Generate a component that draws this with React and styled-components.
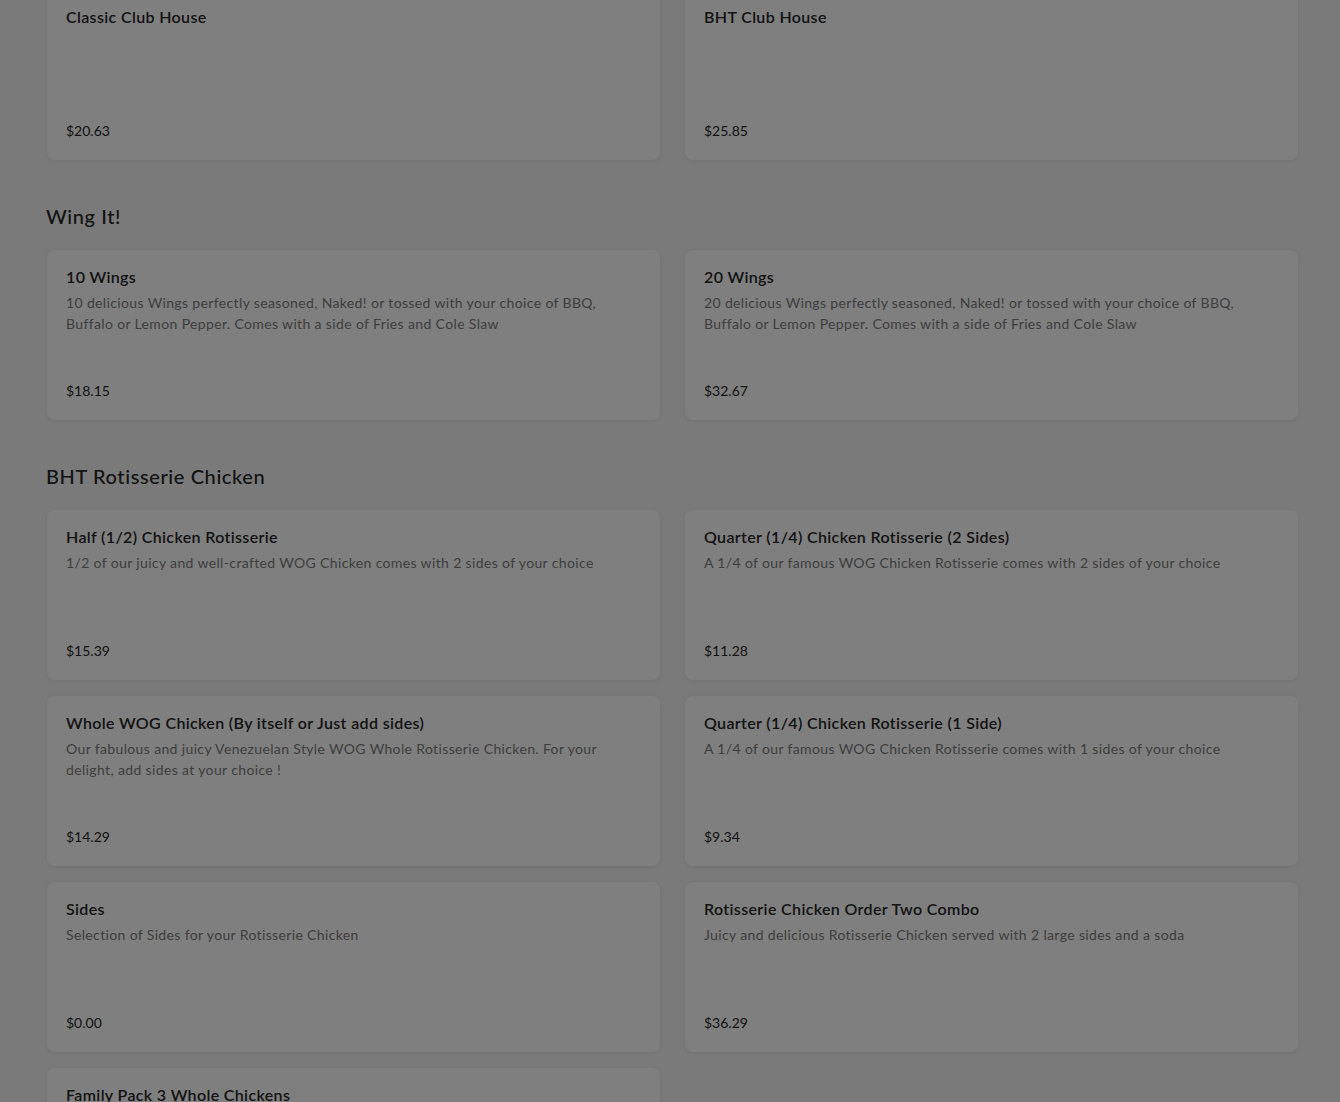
import React from "react"
import styled, { createGlobalStyle } from "styled-components"

const GlobalStyle = createGlobalStyle`
  html, body {
    margin: 0;
    padding: 0;
    background: #f4f4f4;
    font-family: Lato, "Noto Sans", sans-serif;
    overflow: hidden;
  }
`

const menu = [
  {
    title: null,
    items: [
      { name: "Classic Club House", price: "$20.63" },
      { name: "BHT Club House", price: "$25.85" },
    ],
  },
  {
    title: "Wing It!",
    items: [
      {
        name: "10 Wings",
        desc: "10 delicious Wings perfectly seasoned, Naked! or tossed with your choice of BBQ, Buffalo or Lemon Pepper. Comes with a side of Fries and Cole Slaw",
        price: "$18.15",
      },
      {
        name: "20 Wings",
        desc: "20 delicious Wings perfectly seasoned, Naked! or tossed with your choice of BBQ, Buffalo or Lemon Pepper. Comes with a side of Fries and Cole Slaw",
        price: "$32.67",
      },
    ],
  },
  {
    title: "BHT Rotisserie Chicken",
    items: [
      {
        name: "Half (1/2) Chicken Rotisserie",
        desc: "1/2 of our juicy and well-crafted WOG Chicken comes with 2 sides of your choice",
        price: "$15.39",
      },
      {
        name: "Quarter (1/4) Chicken Rotisserie (2 Sides)",
        desc: "A 1/4 of our famous WOG Chicken Rotisserie comes with 2 sides of your choice",
        price: "$11.28",
      },
      {
        name: "Whole WOG Chicken (By itself or Just add sides)",
        desc: "Our fabulous and juicy Venezuelan Style WOG Whole Rotisserie Chicken. For your delight, add sides at your choice !",
        price: "$14.29",
      },
      {
        name: "Quarter (1/4) Chicken Rotisserie (1 Side)",
        desc: "A 1/4 of our famous WOG Chicken Rotisserie comes with 1 sides of your choice",
        price: "$9.34",
      },
      {
        name: "Sides",
        desc: "Selection of Sides for your Rotisserie Chicken",
        price: "$0.00",
      },
      {
        name: "Rotisserie Chicken Order Two Combo",
        desc: "Juicy and delicious Rotisserie Chicken served with 2 large sides and a soda",
        price: "$36.29",
      },
      { name: "Family Pack 3 Whole Chickens", desc: "", price: "" },
    ],
  },
]

const App = () => {
  return (
    <>
      <GlobalStyle />
      <Page>
        {menu.map((section, i) => (
          <Section key={i}>
            {section.title && <SectionTitle>{section.title}</SectionTitle>}
            <Grid>
              {section.items.map(item => (
                <Card key={item.name}>
                  <ItemName>{item.name}</ItemName>
                  {item.desc && <ItemDesc>{item.desc}</ItemDesc>}
                  <Price>{item.price}</Price>
                </Card>
              ))}
            </Grid>
          </Section>
        ))}
      </Page>
      {/* dimmed backdrop, a modal is open above the menu */}
      <Backdrop />
    </>
  )
}

const Page = styled.main`
  margin-top: -10px;
  padding: 0 42px 0 47px;
  display: flex;
  flex-direction: column;
  gap: 42px;
`

const Section = styled.section`
  display: flex;
  flex-direction: column;
`

const SectionTitle = styled.h2`
  margin: 0 0 20px -1px;
  font-size: 20px;
  line-height: 28px;
  font-weight: 500;
  letter-spacing: 0.6px;
  color: #262626;
`

const Grid = styled.div`
  display: grid;
  grid-template-columns: 613px 613px;
  gap: 16px 25px;
`

const Card = styled.article`
  height: 170px;
  box-sizing: border-box;
  padding: 15px 19px 19px;
  background: #ffffff;
  border-radius: 8px;
  box-shadow: 0 1px 4px rgba(0, 0, 0, 0.07);
  display: flex;
  flex-direction: column;
`

const ItemName = styled.h3`
  margin: 0 0 3px;
  font-size: 16px;
  line-height: 24px;
  font-weight: 600;
  letter-spacing: 0.35px;
  color: #262626;
`

const ItemDesc = styled.p`
  margin: 0;
  font-size: 14px;
  line-height: 21px;
  letter-spacing: 0.36px;
  color: #7c7c7c;
`

const Price = styled.span`
  margin-top: auto;
  font-size: 14px;
  line-height: 20px;
  color: #262626;
`

const Backdrop = styled.div`
  position: fixed;
  inset: 0;
  background: rgba(0, 0, 0, 0.5);
`

export default App
